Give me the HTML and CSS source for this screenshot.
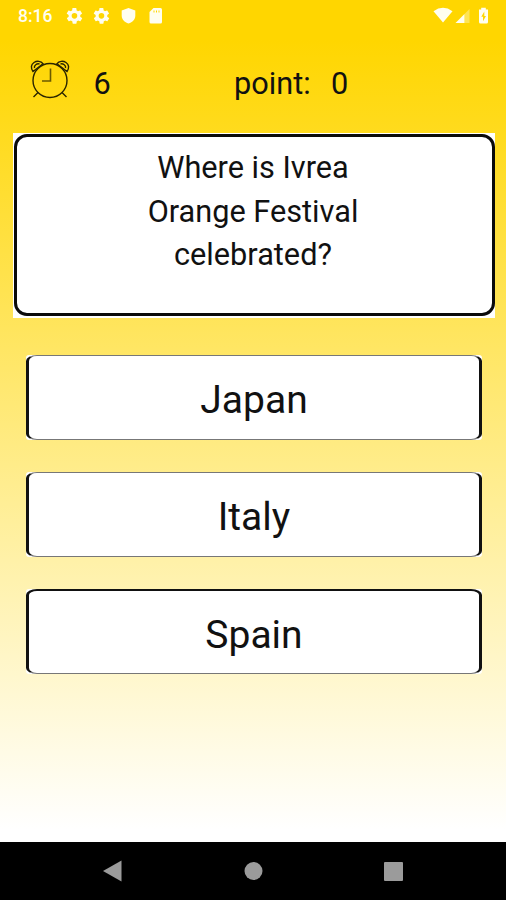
FILE: index.html
```html
<!DOCTYPE html>
<html lang="en">
<head>
<meta charset="utf-8">
<title>Quiz</title>
<link rel="stylesheet" href="styles.css">
</head>
<body>
<div class="screen">
  <header class="status">
    <span class="time">8:16</span>
    <svg class="status-left" viewBox="0 0 100 20" width="100" height="20" fill="currentColor">
      <defs>
        <path id="gear" d="M19.4 13c.1-.7.1-1.400 0-2l2.100-1.600c.2-.2.3-.4.100-.7l-2-3.400c-.1-.2-.4-.3-.6-.2l-2.500 1c-.5-.4-1.100-.7-1.700-1l-.4-2.600c0-.3-.2-.5-.5-.5h-4c-.2 0-.4.2-.5.4l-.4 2.700c-.6.300-1.200.6-1.700 1l-2.500-1c-.2-.1-.5 0-.6.2l-2 3.400c-.1.300 0 .5.100.7L4.600 11c-.1.600-.1 1.300 0 2l-2.100 1.600c-.2.200-.3.400-.1.700l2 3.400c.1.200.4.300.6.200l2.500-1c.5.400 1.100.7 1.700 1l.4 2.600c0 .3.200.5.500.5h4c.3 0 .5-.2.500-.4l.4-2.700c.6-.3 1.200-.6 1.700-1l2.500 1c.2.100.5 0 .6-.2l2-3.400c.1-.3.100-.5-.1-.7zM12 15.600a3.600 3.600 0 1 1 0-7.200 3.600 3.600 0 0 1 0 7.200z"/>
      </defs>
      <use href="#gear" transform="translate(-.9 .5) scale(.78)"/>
      <use href="#gear" transform="translate(26.100 .5) scale(.78)"/>
      <path d="M62.500 2l6.800 2.600V9.500c0 4-2.800 6.800-6.800 8-4-1.200-6.800-4-6.800-8V4.600z"/>
      <path d="M87.500 2h7q1.500 0 1.500 1.500v12.500q0 1.500-1.500 1.500h-9.500q-1.500 0-1.500-1.500V6z"/>
      <path class="cut" d="M88 4.500v2M90.500 4.500v2M93 4.500v2"/>
    </svg>
    <svg class="status-right" viewBox="0 0 60 20" width="60" height="20" fill="currentColor">
      <path d="M1.500 5.200Q11-1.500 20.500 5.200L11 16.500z"/>
      <path d="M23.500 17L32.500 8v9z"/>
      <path opacity=".35" d="M32.500 8l5-5v14h-5z"/>
      <path d="M47 3.500h2.200V1.700h4.600v1.800H56v12.500q0 1.500-1.500 1.500h-6q-1.500 0-1.500-1.500z"/>
      <path class="bolt" d="M52.300 5.500l-3 5.200h1.700v4.500l3-5.200h-1.700z"/>
    </svg>
  </header>

  <div class="score">
    <svg class="clock" viewBox="0 0 42 42" width="42" height="42" fill="none" stroke="#2a2500" stroke-width="1.400">
      <circle cx="21" cy="22.500" r="17"/>
      <path stroke="#6b5a00" stroke-width="1.600" d="M21.500 10.500v12.500H13"/>
      <path d="M9 34.500L4.500 39M33 34.500l4.500 4.500"/>
      <path d="M4 13.500C1.500 10 2 6.500 5 4.500s7-1.500 9 1.200zM38 13.500c2.500-3.500 2-7-1-9s-7-1.500-9 1.200z"/>
      <path d="M5.500 10c-.8-2.500 2.500-4.800 5-4M36.500 10c.8-2.500-2.500-4.800-5-4"/>
    </svg>
    <span class="seconds">6</span>
    <span class="label">point:</span>
    <span class="points">0</span>
  </div>

  <section class="question">
    <p class="prompt"><span class="line">Where is Ivrea</span><span class="line">Orange Festival</span><span class="line">celebrated?</span></p>
  </section>

  <main class="answers">
    <button class="answer"><span class="face">Japan</span></button>
    <button class="answer"><span class="face">Italy</span></button>
    <button class="answer dark-top"><span class="face">Spain</span></button>
  </main>

  <nav class="navbar">
    <svg viewBox="0 0 506 58" width="506" height="58" fill="#9b9b9b">
      <path d="M103 29L121.500 18.500v21z"/>
      <circle cx="253.500" cy="29" r="9"/>
      <rect x="384" y="20" width="19" height="19" rx="1"/>
    </svg>
  </nav>
</div>
</body>
</html>
```
FILE: styles.css
```css
* { box-sizing: border-box; }
body { margin: 0; font-family: Roboto, "Liberation Sans", sans-serif; color: #111; }
svg { display: block; flex: none; }
.screen {
  width: 506px; height: 900px;
  display: flex; flex-direction: column;
  background: linear-gradient(#ffd600 0, #ffd600 40px, #fff 830px);
}
.status { height: 32px; padding: 6px 14px 0 18px; display: flex; align-items: flex-start; color: #fffef0; }
.time { width: 48px; font-size: 17.500px; font-weight: 500; line-height: 20px; }
.status-right { margin-left: auto; }
.cut { stroke: #ffd600; stroke-width: 1; }
.bolt { fill: #ffd600; }
.score { height: 101px; display: flex; align-items: flex-start; padding: 26px 0 0 29px; font-size: 30.700px; line-height: 52px; }
.seconds { width: 161px; padding-left: 22.500px; }
.label { width: 99px; padding-left: 2px; }
.question { width: 482px; height: 185px; margin-left: 13px; padding: 1px 0 2px 1px; background: #fff; flex: none; }
.prompt {
  margin: 0; height: 182px; padding: 9px 3px 0 0;
  border: 3px solid #0b0b0b; border-radius: 13px;
  font-size: 30.700px; line-height: 43.500px; text-align: center;
}
.line { display: block; }
.answers { display: flex; flex-direction: column; gap: 32px; padding: 37px 24px 0 26px; flex: 1; }
.answer { height: 85px; padding: 0; border: 0; border-radius: 3px; background: #fff; font: inherit; color: inherit; }
.face {
  display: flex; align-items: center; justify-content: center; height: 85px; padding-top: 5px;
  border: solid #111; border-width: 1px 3px; border-top-color: #777; border-bottom-color: #777;
  border-radius: 11px / 6px; font-size: 39px;
}
.dark-top .face { border-top: 2px solid #111; }
.navbar { height: 58px; background: #000; }
```
